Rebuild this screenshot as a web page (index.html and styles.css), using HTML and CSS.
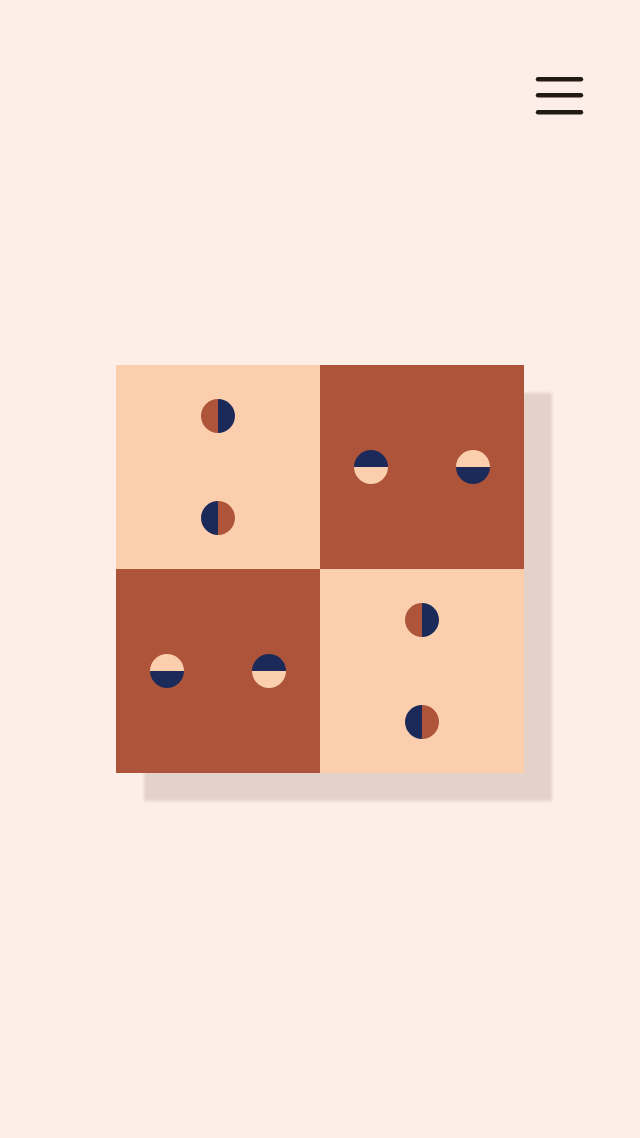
FILE: index.html
```html
<!DOCTYPE html>
<html>
<head>
<meta charset="utf-8">
<link rel="stylesheet" href="styles.css">
</head>
<body>
<header class="topbar">
  <button class="menu" aria-label="Menu">
    <svg width="52" height="42" viewBox="0 0 52 42">
      <g stroke="#231a15" stroke-width="4.4" stroke-linecap="round">
        <line x1="4" y1="4.3" x2="47" y2="4.3"/>
        <line x1="4" y1="20.3" x2="47" y2="20.3"/>
        <line x1="4" y1="37.3" x2="47" y2="37.3"/>
      </g>
    </svg>
  </button>
</header>
<main class="stage">
  <div class="board">
    <div class="tile light vertical">
      <span class="dot lr-bn"></span>
      <span class="dot lr-nb"></span>
    </div>
    <div class="tile dark horizontal">
      <span class="dot tb-nl"></span>
      <span class="dot tb-ln"></span>
    </div>
    <div class="tile dark horizontal">
      <span class="dot tb-ln"></span>
      <span class="dot tb-nl"></span>
    </div>
    <div class="tile light vertical">
      <span class="dot lr-bn"></span>
      <span class="dot lr-nb"></span>
    </div>
  </div>
</main>
</body>
</html>
```
FILE: styles.css
```css
html, body {
  margin: 0;
  padding: 0;
  background: #fdefe7;
  height: 100%;
}
body {
  font-family: "Liberation Sans", Arial, sans-serif;
}
.topbar {
  display: flex;
  justify-content: flex-end;
  padding: 75px 54px 0 0;
  height: 42px;
}
.menu {
  border: 0;
  background: none;
  padding: 0;
  width: 52px;
  height: 42px;
  cursor: pointer;
}
.menu svg { display: block; }
.stage {
  padding: 248px 0 0 116px;
}
.board {
  display: grid;
  grid-template-columns: 204px 204px;
  grid-template-rows: 204px 204px;
  width: 408px;
  box-shadow: 28px 28px 3px #e4d1c9;
}
.tile {
  display: flex;
  justify-content: space-around;
  align-items: center;
}
.tile.vertical { flex-direction: column; }
.tile.horizontal { flex-direction: row; }
.light { background: #fbcfae; }
.dark { background: #ad543a; }
.dot {
  width: 34px;
  height: 34px;
  border-radius: 50%;
}
.lr-bn { background: linear-gradient(to right, #ad543a 50%, #1c2a5a 50%); }
.lr-nb { background: linear-gradient(to right, #1c2a5a 50%, #ad543a 50%); }
.tb-nl { background: linear-gradient(to bottom, #1c2a5a 50%, #fbcfae 50%); }
.tb-ln { background: linear-gradient(to bottom, #fbcfae 50%, #1c2a5a 50%); }
```
